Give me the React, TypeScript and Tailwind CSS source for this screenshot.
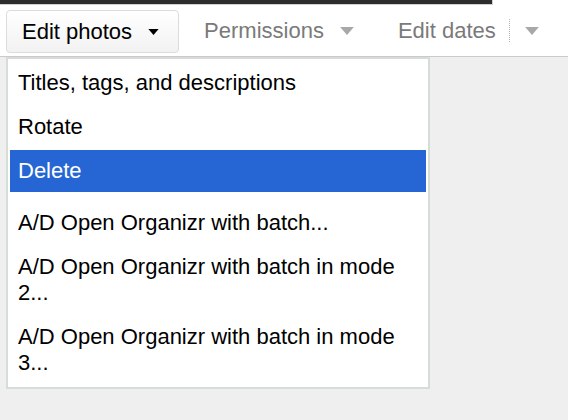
import React from "react";

function Caret({ className }: { className: string }) {
  return (
    <svg width="12" height="7" viewBox="0 0 12 7" className={className}>
      <path d="M0 0 L12 0 L6 7 Z" fill="currentColor" />
    </svg>
  );
}

const items: { label: string; active?: boolean; sep?: boolean }[] = [
  { label: "Titles, tags, and descriptions" },
  { label: "Rotate" },
  { label: "Delete", active: true },
  { label: "", sep: true },
  { label: "A/D Open Organizr with batch..." },
  { label: "A/D Open Organizr with batch in mode 2..." },
  { label: "A/D Open Organizr with batch in mode 3..." },
];

export default function App() {
  return (
    <div
      className="w-[568px] h-[420px] bg-[#efefef] flex flex-col overflow-hidden"
      style={{ fontFamily: "'Liberation Sans', Arial, sans-serif" }}
    >
      {/* top strip */}
      <div className="h-[5px] bg-white flex">
        <div className="w-[493px] h-[5px] bg-[#2d2d2d] border-b border-r border-[#d0d0d0]" />
      </div>

      {/* toolbar */}
      <div className="h-[52px] bg-white border-b border-[#cacaca] flex items-center pl-[6px] text-[22px] leading-[26px]">
        <button className="mt-[2px] h-[43px] flex items-center pl-[15px] pr-[19px] rounded-[4px] border border-[#dcdcdc] bg-gradient-to-b from-white to-[#f2f2f2] text-black">
          <span>Edit photos</span>
          <Caret className="ml-[16px] w-[11px] h-[6px] text-black" />
        </button>

        <div className="ml-[25px] flex items-center text-[#7a7a7a]">
          <span>Permissions</span>
          <Caret className="ml-[16px] w-[14px] h-[8px] text-[#a8a8a8]" />
        </div>

        <div className="ml-[44px] flex items-center text-[#7a7a7a]">
          <span>Edit dates</span>
          <div className="ml-[13px] h-[23px] border-l border-dotted border-[#b5b5b5]" />
          <Caret className="ml-[15px] w-[14px] h-[8px] text-[#a8a8a8]" />
        </div>
      </div>

      {/* dropdown menu */}
      <div className="ml-[6px] w-[424px] bg-white border-2 border-[#d6ddd6] px-[2px] pt-[3px] pb-[3px] flex flex-col gap-[2px] text-[22px] leading-[26px] text-black">
        {items.map((it, i) =>
          it.sep ? (
            <div key={i} className="h-[6px]" />
          ) : (
            <div
              key={i}
              className={
                it.active
                  ? "py-[8px] pl-[8px] pr-[8px] bg-[#2566d4] text-white"
                  : "py-[8px] pl-[8px] pr-[8px]"
              }
            >
              {it.label}
            </div>
          )
        )}
      </div>
    </div>
  );
}
